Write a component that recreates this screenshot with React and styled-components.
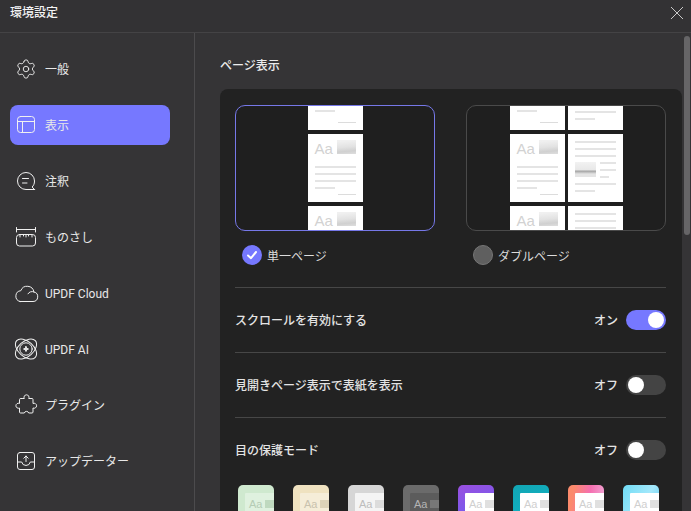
import React from "react";
import styled, { createGlobalStyle } from "styled-components";
import { Settings } from "lucide-react";

const Global = createGlobalStyle`
  html, body { margin: 0; padding: 0; background: #353436; overflow: hidden; }
  * { box-sizing: border-box; }
`;

const FONT = `Roboto, "Noto Sans CJK JP", "Noto Sans", sans-serif`;

const Window = styled.div`
  width: 691px; height: 511px; display: flex; flex-direction: column; overflow: hidden;
  background: #353436; color: #e6e6e6; font-family: ${FONT}; font-size: 12px;
`;
const Header = styled.header`
  height: 33px; flex: none; display: flex; align-items: center; justify-content: space-between;
  padding: 0 7px 7px 10px; border-bottom: 1px solid #444345; background: #333234;
`;
const Title = styled.h1`
  margin: 0; font-size: 12px; font-weight: 500; line-height: 16px; color: #f4f4f4;
`;
const CloseButton = styled.button`
  display: flex; padding: 0; background: none; border: 0; color: #c8c8c8;
`;
const Body = styled.div`flex: 1; display: flex; min-height: 0;`;
const Sidebar = styled.nav`
  width: 195px; flex: none; display: flex; flex-direction: column; gap: 16px;
  padding: 16px 24px 0 10px; border-right: 1px solid #4c4b4d;
`;
const NavItem = styled.div`
  height: 40px; display: flex; align-items: center; gap: 9px; padding-left: 6px;
  border-radius: 8px; color: #e8e8e8;
  background: ${p => p.$active ? "#7678ff" : "transparent"};
  svg { flex: none; overflow: visible; }
`;
const NavLabel = styled.span`
  padding: ${p => p.$latin ? "2px 0 0" : "0 0 2px"};
`;
const Main = styled.main`
  position: relative; flex: 1; min-width: 0; padding: 22px 9px 0 25px; overflow: hidden;
`;
const SectionTitle = styled.h2`
  margin: 0 0 13px; padding-top: 1px; font-size: 12px; line-height: 20px; font-weight: 500; color: #ececec;
`;
const Card = styled.section`
  background: #222222; border-radius: 8px; padding: 16px 16px 0 15px; height: 460px;
`;
const Layouts = styled.div`display: flex; justify-content: space-between;`;
const LayoutOption = styled.div`width: 200px;`;
const Preview = styled.div`
  height: 126px; border-radius: 10px; overflow: hidden; background: #1f1f1f;
  border: 1px solid ${p => p.$selected ? "#7678e8" : "#4a4a4a"};
  display: flex; justify-content: center; gap: 3px;
`;
const PageColumn = styled.div`
  width: 55px; display: flex; flex-direction: column; gap: 4px; flex: none;
`;
const Sheet = styled.div`
  height: 68px; flex: none; background: #fff; padding: 7px; display: flex; flex-direction: column;
`;
const TopSheet = styled(Sheet)`
  height: 24px; padding-top: ${p => p.$pt}px;
`;
const SheetHead = styled.div`
  display: flex; justify-content: space-between; align-items: flex-start; height: 15px; margin: 0 0 5px;
`;
const Aa = styled.span`
  font-family: "Liberation Sans", sans-serif; font-size: 15px; line-height: 15px; color: #d2d2d2;
`;
const Pic = styled.div`
  width: 19px; height: 14px; margin-top: -1px;
  background: linear-gradient(175deg, #f0f0f0 10%, #e2e2e2 50%, #d0d0d0 78%, #dedede 100%);
`;
const Bar = styled.div`
  height: 2px; margin-top: ${p => p.$mt ?? 5}px; width: ${p => p.$w ?? "100%"}; background: #e4e4e4;
  flex: none;
`;
const FootLine = styled.div`
  height: 1px; width: 18px; background: #dcdcdc; align-self: flex-end; margin-top: auto;
`;
const MidRow = styled.div`display: flex; gap: 4px; margin-top: 5px;`;
const MidPic = styled.div`
  width: 21px; height: 15px; flex: none;
  background: linear-gradient(180deg, #f2f2f2 0%, #e8e8e8 50%, #a8a8a8 62%, #e4e4e4 80%);
`;
const MidBars = styled.div`flex: 1; display: flex; flex-direction: column;`;
const RadioRow = styled.div`
  display: flex; align-items: center; gap: 5px; height: 20px; margin: 14px 0 22px 7px;
  color: #dcdcdc;
`;
const RadioOn = styled.span`
  width: 20px; height: 20px; border-radius: 50%; background: #7678ff; display: flex;
  align-items: center; justify-content: center; flex: none;
`;
const RadioOff = styled.span`
  width: 20px; height: 20px; border-radius: 50%; background: #5f5f5f; border: 1px solid #767676; flex: none;
`;
const SettingRow = styled.div`
  height: 65px; display: flex; align-items: center; justify-content: space-between;
  border-top: 1px solid #474747; font-weight: 500; color: #e4e4e4;
`;
const RowLabel = styled.span`padding-bottom: 2px;`;
const ToggleGroup = styled.div`display: flex; align-items: center; gap: 8px;`;
const Track = styled.span`
  width: 40px; height: 20px; border-radius: 10px; padding: 2px; display: flex;
  justify-content: ${p => p.$on ? "flex-end" : "flex-start"};
  background: ${p => p.$on ? "#7678ff" : "#444444"};
`;
const Knob = styled.span`width: 16px; height: 16px; border-radius: 50%; background: #fff;`;
const Swatches = styled.div`display: flex; gap: 19px; margin: 3px 0 0 3px;`;
const Swatch = styled.div`
  width: 36px; height: 36px; flex: none; border-radius: 5px; overflow: hidden;
  background: ${p => p.$bg}; padding: 8px 0 0 7px;
`;
const SwatchInner = styled.div`
  height: 28px; background: ${p => p.$bg}; display: flex; gap: 3px; padding: 5px 0 0 4px; overflow: hidden;
  border-radius: 1px 0 0 0;
`;
const SwatchAa = styled.span`
  font-family: "Liberation Sans", sans-serif; font-size: 11px; line-height: 13px; color: ${p => p.$c};
`;
const SwatchPic = styled.span`
  width: 11px; height: 8px; margin-top: 2px; flex: none; background: ${p => p.$c};
`;
const Scrollbar = styled.div`
  position: absolute; right: 1px; top: 3px; width: 6px; height: 199px; border-radius: 3px; background: #666567;
`;

const Ic = ({ children }) => (
  <svg width="20" height="20" viewBox="0 0 20 20" fill="none" stroke="#f0f0f0" strokeWidth="1" strokeLinecap="round" strokeLinejoin="round">{children}</svg>
);

const icons = {
  gear: <Settings size={22} strokeWidth={1} color="#f0f0f0" style={{ margin: "0 -1px" }} />,
  layout: <Ic><rect x="1.5" y="1.5" width="17" height="16" rx="3"/><path d="M1.500 6.500h17M6.500 6.500v11"/></Ic>,
  note: <Ic><path d="M18.500 18.500H10A8.500 8.500 0 1 1 18.500 10c0 3-1 4.600-2.400 6l2.400 2.500z"/><path d="M6.500 7.500h6M6.500 12h4.500"/></Ic>,
  ruler: <Ic><path d="M.5.500v4.500M19.500.500v4.500M.5 2.500h19"/><rect x=".5" y="7.500" width="19" height="11.500" rx="3"/><path d="M4 7.500v2.500M7.500 7.500v1.500M10 7.500v2.500M12.500 7.500v1.500M16 7.500v2.500"/></Ic>,
  cloud: <Ic><path d="M4 18.500h13a4.800 4.800 0 0 0 .9-9.500A6.800 6.800 0 0 0 4.800 7.700 5.500 5.500 0 0 0 4 18.500z"/><path d="M12 10.800a4.300 4.300 0 0 1 5.900-1.800"/></Ic>,
  ai: <Ic><circle cx="10" cy="10" r="6.200"/><ellipse cx="10" cy="10" rx="12.500" ry="7.500" transform="rotate(-42 10 10)"/><ellipse cx="10" cy="10" rx="12.500" ry="7.500" transform="rotate(42 10 10)"/><path d="M10 7.500 10.700 9.300 12.500 10l-1.800.7-.7 1.800-.7-1.800L7.500 10l1.800-.7z" fill="#f0f0f0"/></Ic>,
  plugin: <Ic><path d="M6.500 3.500h1.800a2.500 2.500 0 1 1 4.400 0H16a1 1 0 0 1 1 1v4a2.500 2.500 0 1 1 0 4.500V17a1 1 0 0 1-1 1h-3.300a2.300 2.300 0 0 0-4.400 0H4.500a1 1 0 0 1-1-1v-4a2.500 2.500 0 1 1 0-4.500v-4a1 1 0 0 1 1-1z"/></Ic>,
  update: <Ic><rect x="1.500" y="1.500" width="17" height="17" rx="2.500"/><path d="M1.500 11h4.200a4.400 4.400 0 0 0 8.600 0h4.200M10 10.500V5M7.800 7.200 10 5l2.200 2.200"/></Ic>,
};

const nav = [
  ["gear", "一般"], ["layout", "表示", true], ["note", "注釈"], ["ruler", "ものさし"],
  ["cloud", "UPDF Cloud", false, true], ["ai", "UPDF AI", false, true], ["plugin", "プラグイン"], ["update", "アップデーター"],
];

const LeftSheet = () => (
  <Sheet>
    <SheetHead><Aa>Aa</Aa><Pic /></SheetHead>
    <Bar /><Bar /><Bar /><Bar $w="50%" />
    <FootLine />
  </Sheet>
);
const RightSheet = () => (
  <Sheet>
    <Bar $mt={0} /><Bar /><Bar />
    <MidRow>
      <MidPic />
      <MidBars><Bar $mt={0} /><Bar /><Bar $w="60%" /></MidBars>
    </MidRow>
    <Bar /><Bar $w="50%" />
  </Sheet>
);
const LeftColumn = () => (
  <PageColumn>
    <TopSheet $pt={4}><Bar $mt={0} $w="50%" /><FootLine /></TopSheet>
    <LeftSheet />
    <LeftSheet />
  </PageColumn>
);
const RightColumn = () => (
  <PageColumn>
    <TopSheet $pt={5}><Bar $mt={0} /><Bar $w="50%" /></TopSheet>
    <RightSheet />
    <RightSheet />
  </PageColumn>
);

const swatches = [
  { bg: "#cfe9cf", inner: "#dff1df", c: "#b5ccb5", p: "#bfd9bf" },
  { bg: "#efe2c0", inner: "#f5edd8", c: "#c9c2ae", p: "#ddd3b8" },
  { bg: "#d6d6d6", inner: "#f4f4f4", c: "#bdbdbd", p: "#dcdcdc" },
  { bg: "#6b6b6b", inner: "#5c5c5c", c: "#b4b4b4", p: "#777" },
  { bg: "linear-gradient(160deg,#9a4fe0,#6660f2)", inner: "#fff", c: "#cfcfcf", p: "#e0e0e0" },
  { bg: "linear-gradient(160deg,#12a6b4,#10b4c6)", inner: "#fff", c: "#cfcfcf", p: "#e0e0e0" },
  { bg: "linear-gradient(100deg,#fb8a6c 15%,#f56fb0 55%,#f0b0dc)", inner: "#fff", c: "#cfcfcf", p: "#e0e0e0" },
  { bg: "linear-gradient(120deg,#6fdcf5,#a4e8fb 55%,#56c8f0)", inner: "#fff", c: "#cfcfcf", p: "#e0e0e0" },
];

const Toggle = ({ on }) => (
  <ToggleGroup>
    <RowLabel>{on ? "オン" : "オフ"}</RowLabel>
    <Track $on={on}><Knob /></Track>
  </ToggleGroup>
);

export default function App() {
  return (
    <Window>
      <Global />
      <Header>
        <Title>環境設定</Title>
        <CloseButton aria-label="閉じる">
          <svg width="14" height="14" viewBox="0 0 14 14" fill="none" stroke="currentColor" strokeWidth="1"><path d="M1 1l12 12M13 1 1 13" /></svg>
        </CloseButton>
      </Header>
      <Body>
        <Sidebar>
          {nav.map(([icon, label, active, latin]) => (
            <NavItem key={label} $active={active}>{icons[icon]}<NavLabel $latin={latin}>{label}</NavLabel></NavItem>
          ))}
        </Sidebar>
        <Main>
          <SectionTitle>ページ表示</SectionTitle>
          <Card>
            <Layouts>
              <LayoutOption>
                <Preview $selected><LeftColumn /></Preview>
                <RadioRow>
                  <RadioOn>
                    <svg width="12" height="12" viewBox="0 0 12 12" fill="none" stroke="#fff" strokeWidth="2" strokeLinecap="round" strokeLinejoin="round"><path d="M2 6.500 5 9.200 10 3" /></svg>
                  </RadioOn>
                  単一ページ
                </RadioRow>
              </LayoutOption>
              <LayoutOption>
                <Preview><LeftColumn /><RightColumn /></Preview>
                <RadioRow><RadioOff />ダブルページ</RadioRow>
              </LayoutOption>
            </Layouts>
            <SettingRow><RowLabel>スクロールを有効にする</RowLabel><Toggle on /></SettingRow>
            <SettingRow><RowLabel>見開きページ表示で表紙を表示</RowLabel><Toggle /></SettingRow>
            <SettingRow><RowLabel>目の保護モード</RowLabel><Toggle /></SettingRow>
            <Swatches>
              {swatches.map((s, i) => (
                <Swatch key={i} $bg={s.bg}>
                  <SwatchInner $bg={s.inner}>
                    <SwatchAa $c={s.c}>Aa</SwatchAa><SwatchPic $c={s.p} />
                  </SwatchInner>
                </Swatch>
              ))}
            </Swatches>
          </Card>
          <Scrollbar />
        </Main>
      </Body>
    </Window>
  );
}
